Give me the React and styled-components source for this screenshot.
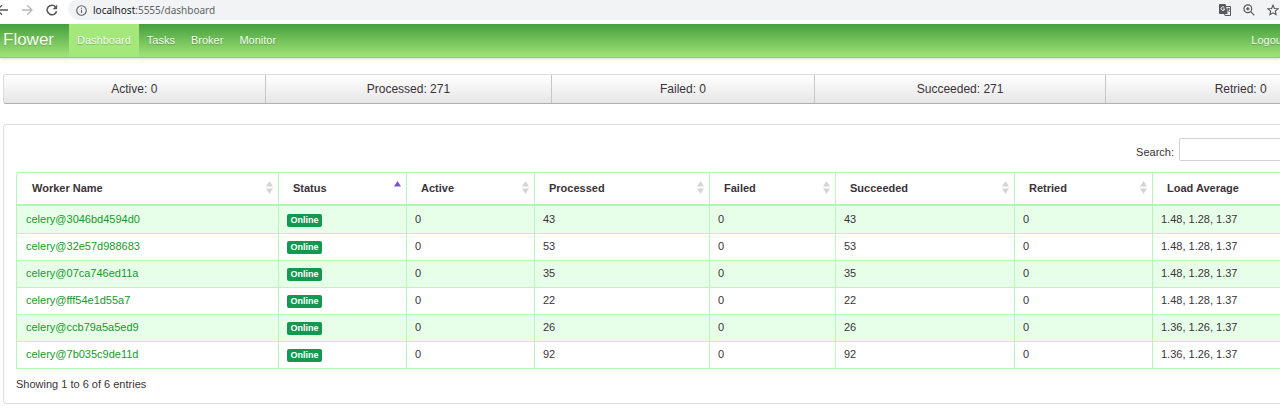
import React from "react";
import styled, { createGlobalStyle, css } from "styled-components";

const GlobalStyle = createGlobalStyle`
  *, *::before, *::after { box-sizing: border-box; }
  body {
    margin: 0;
    background: #fff;
    color: #3a3338;
    font: 11px/16px "Liberation Sans", Arial, sans-serif;
    overflow-x: hidden;
  }
  a { text-decoration: none; }
  button { font: inherit; color: inherit; background: none; border: 0; padding: 0; cursor: pointer; }
`;

const BrowserBar = styled.header`
  display: flex;
  align-items: flex-start;
  height: 24px;
  overflow: hidden;
`;

const BrowserControls = styled.div`
  display: flex;
  flex: none;
  gap: 13px;
  width: 68px;
  height: 20px;
  align-items: center;
`;

const IconButton = styled.button`
  display: flex;
  flex: none;
  color: ${(p) => (p.$muted ? "#b4b6b9" : "#55585c")};
`;

const BackButton = styled(IconButton)`
  margin-left: -4px;
`;

const AddressField = styled.div`
  display: flex;
  flex: 1;
  align-items: center;
  height: 20px;
  padding-left: 8px;
  background: #f1f3f4;
  border-radius: 10px 0 0 14px;
  color: #5f6368;
  font: 10px/20px "Noto Sans", sans-serif;
`;

const Url = styled.span`
  flex: 1;
  margin-left: 6px;
`;

const Host = styled.span`
  color: #202124;
`;

const AddressActions = styled.div`
  display: flex;
  gap: 12px;
  margin-right: 1px;
`;

const Navbar = styled.nav`
  display: flex;
  height: 34px;
  background: linear-gradient(#459f3d, #a2e378);
  border-bottom: 1px solid #8fc873;
  box-shadow: 0 1px 3px rgba(0, 0, 0, 0.15);
`;

const Brand = styled.a`
  padding: 0 15px 0 3px;
  color: #f4fff0;
  font-size: 17px;
  line-height: 32px;
  text-shadow: 0 1px 1px rgba(0, 0, 0, 0.15);
`;

const NavLink = styled.a`
  padding: 0 8px;
  color: #f4fff0;
  line-height: 33px;
  text-shadow: 0 1px 1px rgba(0, 0, 0, 0.25);
  ${(p) => p.$active && css`
    background: #a4e87b;
  `}
`;

const LogoutLink = styled(NavLink)`
  margin-left: auto;
  margin-right: -13px;
`;

const Page = styled.main`
  width: calc(100% + 96px);
  padding: 16px 0 6px 3px;
`;

const Stats = styled.div`
  display: grid;
  grid-template-columns: 261fr 287fr 263fr 292fr 270fr;
  height: 30px;
  border: 1px solid #dcdcdc;
  border-bottom-color: #b0b0b0;
  border-radius: 3px;
  background: linear-gradient(#fff, #e6e6e6);
`;

const Stat = styled.a`
  color: #3a3338;
  font-size: 12px;
  line-height: 28px;
  text-align: center;
  & + & { border-left: 1px solid #c6c6c6; }
`;

const Panel = styled.section`
  margin-top: 20px;
  padding: 13px 12px 11px;
  border: 1px solid #ddd;
  border-radius: 3px;
`;

const SearchLabel = styled.label`
  display: flex;
  justify-content: flex-end;
  align-items: center;
  gap: 5px;
  line-height: 28px;
`;

const SearchInput = styled.input`
  align-self: flex-start;
  width: 184px;
  height: 23px;
  padding: 0 4px;
  border: 1px solid #d5d0d4;
  border-radius: 2px;
  font: inherit;
`;

const Table = styled.table`
  width: 100%;
  margin-top: 6px;
  table-layout: fixed;
  border-collapse: separate;
  border-spacing: 0;
  border: solid #b5f7bb;
  border-width: 1px 1px 1px 0;
  border-radius: 3px 3px 0 0;
`;

const Column = styled.col`
  width: ${(p) => (p.$width ? `${p.$width}px` : "auto")};
`;

const HeadCell = styled.th`
  height: 33px;
  padding: 0 5px 2px 14px;
  border-left: 1px solid #b5f7bb;
  border-bottom: 2px solid #b0f5b6;
  &:first-child {
    padding-left: 15px;
    border-top-left-radius: 3px;
  }
`;

const SortButton = styled.button`
  display: flex;
  width: 100%;
  align-items: center;
  justify-content: space-between;
  font-weight: bold;
`;

const Row = styled.tr`
  background: #fff;
  &:nth-child(odd) { background: #e7ffe9; }
`;

const Cell = styled.td`
  height: 27px;
  padding: 0 8px 2px;
  border-left: 1px solid #b5f7bb;
  line-height: 24px;
  tbody tr + tr > & { border-top: 1px solid #b9f7be; }
  &:first-child { padding-left: 9px; }
`;

const WorkerLink = styled.a`
  color: #169a2b;
`;

const Badge = styled.span`
  display: block;
  width: 35px;
  margin-top: 3px;
  border-radius: 2px;
  background: #149850;
  color: #fff;
  font-size: 9px;
  font-weight: bold;
  line-height: 13px;
  text-align: center;
`;

const Summary = styled.p`
  margin: 7px 0 0;
`;

function SortIcon({ sorted }) {
  return (
    <svg width="7" height="13" viewBox="0 0 7 13" aria-hidden="true">
      <path d="M3.5 0 7 5.5H0Z" fill={sorted ? "#7f4fd0" : "#d6d3d8"} />
      {!sorted && <path d="M0 7.5h7L3.5 13Z" fill="#d6d3d8" />}
    </svg>
  );
}

function LineIcon({ size = 12, width = 1.3, children }) {
  return (
    <svg width={size} height={size} viewBox="0 0 12 12" fill="none" stroke="currentColor" strokeWidth={width} aria-hidden="true">
      {children}
    </svg>
  );
}

const columns = [
  { name: "Worker Name", width: 262 },
  { name: "Status", width: 128, sorted: true },
  { name: "Active", width: 128 },
  { name: "Processed", width: 175 },
  { name: "Failed", width: 126 },
  { name: "Succeeded", width: 179 },
  { name: "Retried", width: 138 },
  { name: "Load Average" },
];

const workers = [
  { name: "celery@3046bd4594d0", count: 43, load: "1.48, 1.28, 1.37" },
  { name: "celery@32e57d988683", count: 53, load: "1.48, 1.28, 1.37" },
  { name: "celery@07ca746ed11a", count: 35, load: "1.48, 1.28, 1.37" },
  { name: "celery@fff54e1d55a7", count: 22, load: "1.48, 1.28, 1.37" },
  { name: "celery@ccb79a5a5ed9", count: 26, load: "1.36, 1.26, 1.37" },
  { name: "celery@7b035c9de11d", count: 92, load: "1.36, 1.26, 1.37" },
];

const stats = ["Active: 0", "Processed: 271", "Failed: 0", "Succeeded: 271", "Retried: 0"];

export default function App() {
  return (
    <>
      <GlobalStyle />
      <BrowserBar>
        <BrowserControls>
          <BackButton aria-label="Back">
            <LineIcon><path d="M12 6H1.5M6 1.2 1.2 6 6 10.8" /></LineIcon>
          </BackButton>
          <IconButton aria-label="Forward" $muted>
            <LineIcon><path d="M1 6h10M6.2 1.2 11 6l-4.8 4.8" /></LineIcon>
          </IconButton>
          <IconButton aria-label="Reload">
            <LineIcon width={1.5}>
              <path d="M10.6 7.2A4.8 4.8 0 1 1 9.6 2.8" />
              <path d="M11.2.6v4.6H6.6Z" fill="currentColor" stroke="none" />
            </LineIcon>
          </IconButton>
        </BrowserControls>
        <AddressField>
          <LineIcon size={11} width={1.2}>
            <circle cx="6" cy="6" r="5.2" />
            <path d="M6 5.2v3.6M6 3v1.2" />
          </LineIcon>
          <Url><Host>localhost</Host>:5555/dashboard</Url>
          <AddressActions>
            <IconButton aria-label="Translate">
              <LineIcon width={1}>
                <path d="M.5.5h5.7l2 9H.5Z" fill="currentColor" />
                <path d="M7 2.5h4.5v9H6l-.6-2M8 5h3M9.6 4v1c0 1-.8 2-1.8 2.6M8.4 5.6l2.2 2.4" />
                <path d="M5.4 3.8A1.8 1.8 0 1 0 5.6 5H4" stroke="#f1f3f4" />
              </LineIcon>
            </IconButton>
            <IconButton aria-label="Zoom">
              <LineIcon width={1.2}>
                <circle cx="4.8" cy="4.8" r="3.9" />
                <path d="m7.7 7.7 3.6 3.6M3 4.8h3.6M4.8 3v3.6" />
              </LineIcon>
            </IconButton>
            <IconButton aria-label="Bookmark">
              <LineIcon width={1.1}>
                <path d="m6 1.2 1.4 3.3 3.6.3-2.7 2.4.8 3.5L6 8.8l-3.1 1.9.8-3.5L1 4.8l3.6-.3Z" />
              </LineIcon>
            </IconButton>
          </AddressActions>
        </AddressField>
      </BrowserBar>

      <Navbar>
        <Brand href="#">Flower</Brand>
        <NavLink href="#dashboard" $active>Dashboard</NavLink>
        <NavLink href="#tasks">Tasks</NavLink>
        <NavLink href="#broker">Broker</NavLink>
        <NavLink href="#monitor">Monitor</NavLink>
        <LogoutLink href="#logout">Logout</LogoutLink>
      </Navbar>

      <Page>
        <Stats>
          {stats.map((text) => <Stat key={text} href="#tasks">{text}</Stat>)}
        </Stats>
        <Panel>
          <SearchLabel>
            Search:
            <SearchInput type="text" />
          </SearchLabel>
          <Table>
            <colgroup>
              {columns.map((c) => <Column key={c.name} $width={c.width} />)}
            </colgroup>
            <thead>
              <tr>
                {columns.map((c) => (
                  <HeadCell key={c.name} scope="col" aria-sort={c.sorted ? "ascending" : undefined}>
                    <SortButton>{c.name}<SortIcon sorted={c.sorted} /></SortButton>
                  </HeadCell>
                ))}
              </tr>
            </thead>
            <tbody>
              {workers.map((w) => (
                <Row key={w.name}>
                  <Cell><WorkerLink href="#worker">{w.name}</WorkerLink></Cell>
                  <Cell><Badge>Online</Badge></Cell>
                  <Cell>0</Cell>
                  <Cell>{w.count}</Cell>
                  <Cell>0</Cell>
                  <Cell>{w.count}</Cell>
                  <Cell>0</Cell>
                  <Cell>{w.load}</Cell>
                </Row>
              ))}
            </tbody>
          </Table>
          <Summary>Showing 1 to 6 of 6 entries</Summary>
        </Panel>
      </Page>
    </>
  );
}
